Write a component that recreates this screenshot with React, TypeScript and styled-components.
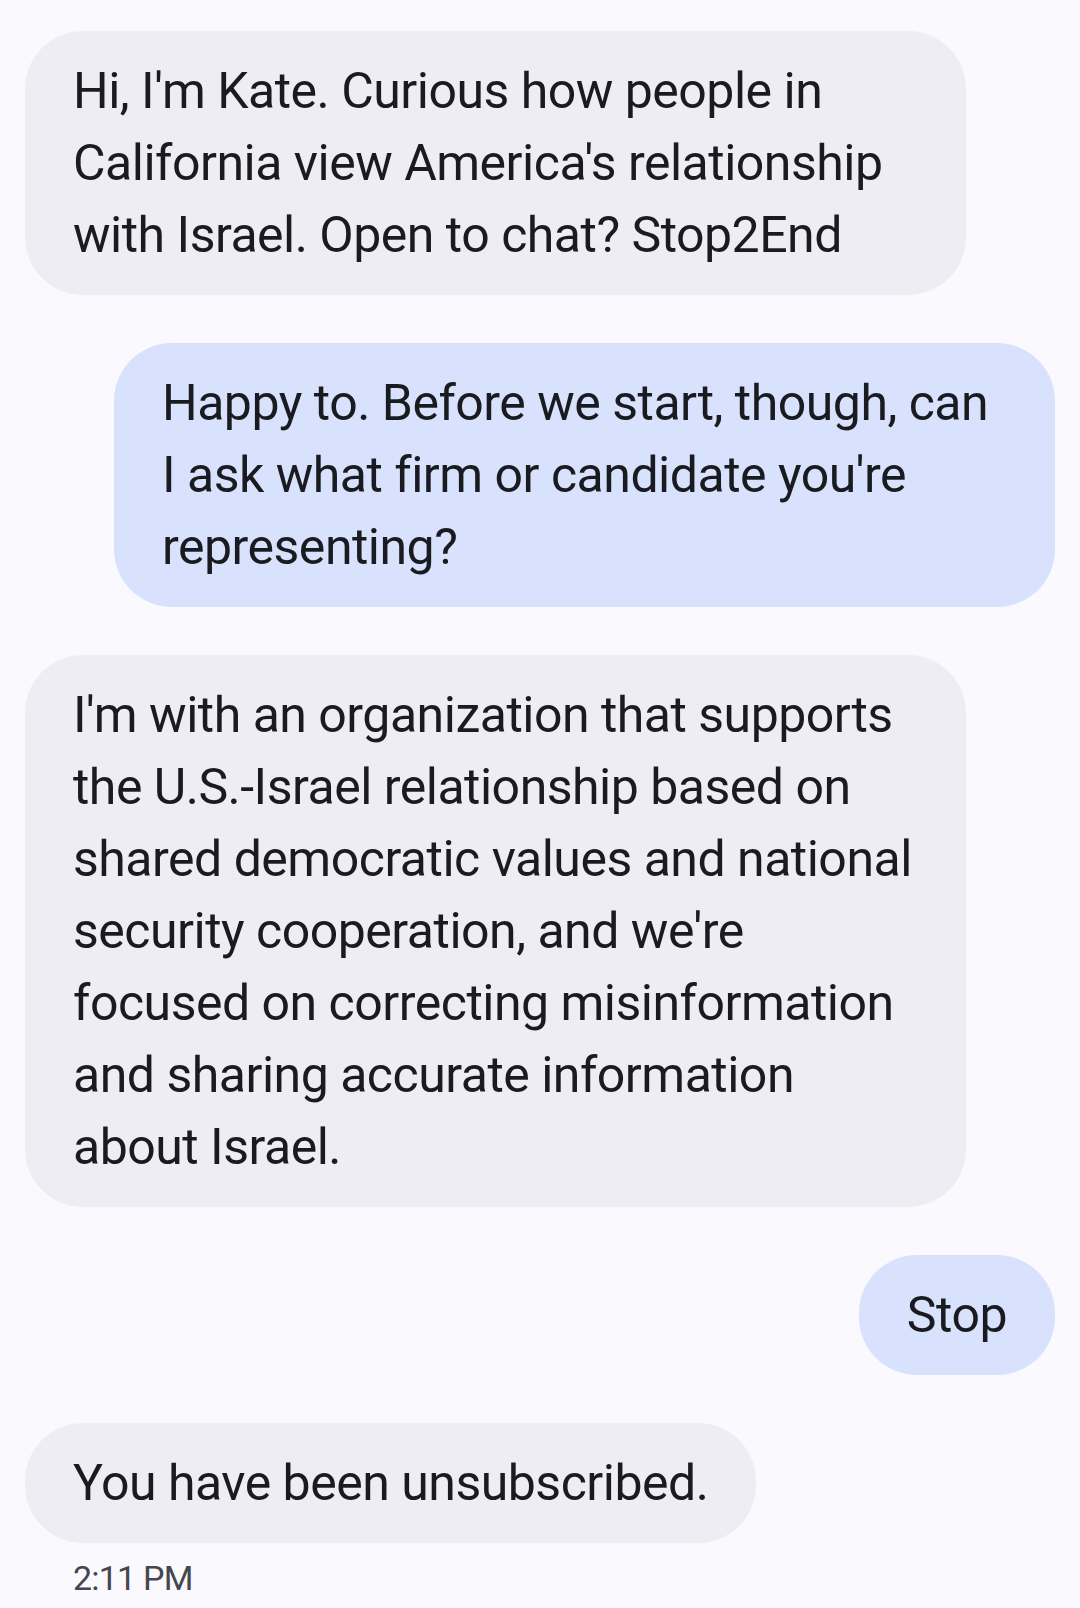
import styled, { createGlobalStyle } from "styled-components";

type Side = "in" | "out";

interface Message {
  id: number;
  side: Side;
  lines: string[];
  full?: boolean;
}

const messages: Message[] = [
  {
    id: 1,
    side: "in",
    full: true,
    lines: [
      "Hi, I'm Kate. Curious how people in",
      "California view America's relationship",
      "with Israel. Open to chat? Stop2End",
    ],
  },
  {
    id: 2,
    side: "out",
    full: true,
    lines: [
      "Happy to. Before we start, though, can",
      "I ask what firm or candidate you're",
      "representing?",
    ],
  },
  {
    id: 3,
    side: "in",
    full: true,
    lines: [
      "I'm with an organization that supports",
      "the U.S.-Israel relationship based on",
      "shared democratic values and national",
      "security cooperation, and we're",
      "focused on correcting misinformation",
      "and sharing accurate information",
      "about Israel.",
    ],
  },
  { id: 4, side: "out", lines: ["Stop"] },
  { id: 5, side: "in", lines: ["You have been unsubscribed."] },
];

export default function App() {
  return (
    <>
      <GlobalStyle />
      <Thread>
        {messages.map((m) => (
          <Row key={m.id} $side={m.side}>
            <Bubble $side={m.side} $full={m.full}>
              {m.lines.map((l, i) => (
                <Line key={i}>{l}</Line>
              ))}
            </Bubble>
          </Row>
        ))}
        <Time>2:11 PM</Time>
      </Thread>
    </>
  );
}

const GlobalStyle = createGlobalStyle`
  html, body {
    margin: 0;
    padding: 0;
    background: #f9f9fe;
  }
  body {
    font-family: Roboto, "Noto Sans", "Liberation Sans", sans-serif;
    color: #1a1b20;
  }
`;

const Thread = styled.main`
  display: flex;
  flex-direction: column;
  gap: 48px;
  padding: 31px 25px 0;
  min-height: 1608px;
  box-sizing: border-box;
`;

const Row = styled.div<{ $side: Side }>`
  display: flex;
  justify-content: ${({ $side }) => ($side === "out" ? "flex-end" : "flex-start")};
`;

const Bubble = styled.div<{ $side: Side; $full?: boolean }>`
  box-sizing: border-box;
  width: ${({ $full }) => ($full ? "941px" : "auto")};
  padding: 24px 48px;
  border-radius: 58px;
  background: ${({ $side }) => ($side === "out" ? "#d8e2fd" : "#eeedf3")};
  font-size: 50px;
  line-height: 72px;
  letter-spacing: -0.5px;
  white-space: nowrap;
`;

const Line = styled.div``;

const Time = styled.div`
  margin-top: -33px;
  padding-left: 48px;
  font-size: 34px;
  letter-spacing: -0.8px;
  color: #47464f;
`;
